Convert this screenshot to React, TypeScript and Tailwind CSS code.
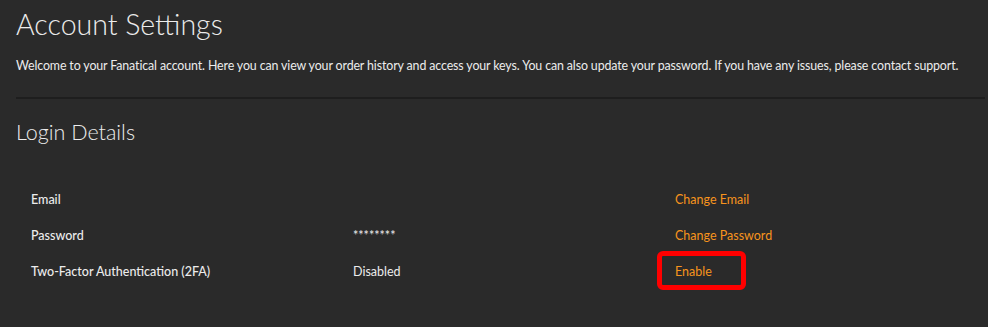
export default function App() {
  const rows = [
    { label: 'Email', value: '', action: 'Change Email', boxed: false },
    { label: 'Password', value: '********', action: 'Change Password', boxed: false },
    { label: 'Two-Factor Authentication (2FA)', value: 'Disabled', action: 'Enable', boxed: true },
  ]

  return (
    <div className="w-[988px] h-[327px] bg-[#2a2a2a] text-[#ececec] font-['Lato',sans-serif] overflow-hidden">
      <div className="pl-4 pr-[3px]">
        <h1 className="text-[28.5px] font-light leading-[36px] pt-[6px]">Account Settings</h1>
        <p className="text-[12.4px] leading-4 mt-[16px] whitespace-nowrap tracking-[-0.12px]">
          Welcome to your Fanatical account. Here you can view your order history and access your keys. You can also update your password. If you have any issues, please contact support.
        </p>
        <div className="h-[2px] bg-[#1e1e1e] mt-[23px]" />
        <h2 className="text-[21.5px] font-light leading-7 mt-[19px]">Login Details</h2>
        <div className="mt-[45px] pl-[15px] flex flex-col gap-[18px] text-[12.5px] leading-[18px]">
          {rows.map((r) => (
            <div key={r.label} className="flex items-center">
              <div className="w-[322px] font-medium">{r.label}</div>
              <div className="w-[322px]">{r.value}</div>
              <div className="relative">
                <a className="text-[#f7941d]">{r.action}</a>
                {r.boxed && (
                  <span className="absolute -left-[18px] -top-[12px] w-[89px] h-[39px] border-[5px] border-[#ff0000] rounded-[6px]" />
                )}
              </div>
            </div>
          ))}
        </div>
      </div>
    </div>
  )
}
